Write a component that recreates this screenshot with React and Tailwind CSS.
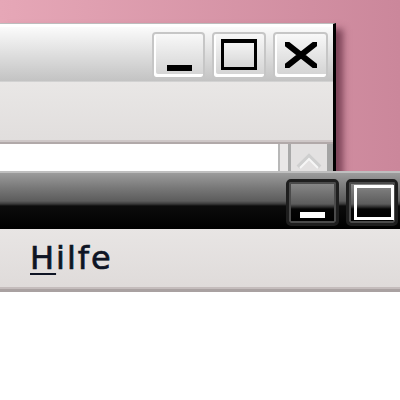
function LightButton({ children, className = '' }) {
  return (
    <div
      className={`relative h-[47px] rounded-[4px] border-2 border-[#c6c6c6] bg-gradient-to-b from-[#f8f8f8] to-[#d2d2d2] shadow-[inset_2px_-3px_0_#ffffff] ${className}`}
    >
      {children}
    </div>
  );
}

function DarkButton({ children, className = '' }) {
  return (
    <div
      className={`relative h-[47px] rounded-[5px] border-[3px] border-[#1e1e1e] bg-[linear-gradient(to_bottom,#8a8a8a_0px,#5c5c5c_22px,#2a2a2a_25px,#050505_27px,#000000_41px)] shadow-[inset_0_0_0_2px_#4a4a4a] ${className}`}
    >
      {children}
    </div>
  );
}

function BackWindow() {
  return (
    <div className="absolute left-0 top-[23px] w-[336px] h-[170px] flex flex-col border-r-[3px] border-black border-t border-t-[#bdbdbd] shadow-[7px_6px_7px_rgba(70,20,40,0.6)]">
      <div className="h-[57px] border-t-[3px] border-white bg-gradient-to-b from-[#fbfbfb] to-[#c3c3c3] flex justify-end items-start gap-[7px] pr-[5px] pt-[5px]">
        <LightButton className="w-[53px]">
          <div className="absolute left-[13px] top-[31px] w-[25px] h-[6px] bg-black" />
        </LightButton>
        <LightButton className="w-[54px]">
          <div className="absolute left-[7px] top-[5px] w-[36px] h-[31px] border-x-[3px] border-t-[4px] border-b-[3px] border-black bg-gradient-to-b from-[#f4f4f4] to-[#d6d6d6]" />
        </LightButton>
        <LightButton className="w-[55px]">
          <svg className="absolute left-[10px] top-[8px]" width="32" height="26" viewBox="0 0 32 26">
            <path d="M2 2 L30 24 M30 2 L2 24" stroke="#000" strokeWidth="6" strokeLinecap="square" fill="none" />
          </svg>
        </LightButton>
      </div>
      <div className="h-px bg-[#d2d2d2]" />
      <div className="h-[58px] bg-gradient-to-b from-[#e9e7e6] to-[#e1dedd]" />
      <div className="h-[2px] bg-[#cec7c7]" />
      <div className="h-[2px] bg-[#b1a9a9]" />
      <div className="flex-1 flex">
        <div className="w-[278px] bg-white" />
        <div className="w-[2px] bg-[#b8b8b8]" />
        <div className="w-[8px] bg-[#e9e7e7]" />
        <div className="w-[3px] bg-[#a9a9a9]" />
        <div className="w-[36px] bg-[#e3e1e1] flex justify-center pt-[9px]">
          <svg width="28" height="16" viewBox="0 0 28 16">
            <path d="M3 14 L14 3 L25 14" stroke="#cfcfcf" strokeWidth="4" fill="none" />
            <path d="M5 15 L14 6 L23 15" stroke="#f6f6f6" strokeWidth="2" fill="none" />
          </svg>
        </div>
        <div className="w-[6px] bg-[#a4a4a4]" />
      </div>
    </div>
  );
}

function FrontWindow() {
  return (
    <div className="absolute left-0 top-[171px] w-[466px] h-[240px] flex flex-col bg-white">
      <div className="h-[2px] bg-[#bfbfbf]" />
      <div className="h-[56px] bg-[linear-gradient(to_bottom,#9c9c9c_0px,#7a7a7a_14px,#5c5c5c_28px,#383838_31px,#0c0c0c_33px,#000000_56px)] flex justify-end items-start gap-[7px] pr-[8px] pt-[6px]">
        <DarkButton className="w-[53px]">
          <div className="absolute left-[11px] top-[30px] w-[25px] h-[6px] bg-white" />
        </DarkButton>
        <DarkButton className="w-[52px]">
          <div className="absolute left-[5px] top-[3px] w-[40px] h-[35px] border-[3px] border-white" />
        </DarkButton>
        <DarkButton className="w-[53px]">
          <svg className="absolute left-[9px] top-[7px]" width="32" height="26" viewBox="0 0 32 26">
            <path d="M2 2 L30 24 M30 2 L2 24" stroke="#fff" strokeWidth="6" fill="none" />
          </svg>
        </DarkButton>
      </div>
      <div className="h-[58px] bg-gradient-to-b from-[#e8e5e4] to-[#dfdbda] pl-[30px] pt-[11px]">
        <span
          className="text-[32px] leading-[37px] tracking-[2px] text-[#0e1424] [-webkit-text-stroke:0.7px_#0e1424]"
          style={{ fontFamily: '"DejaVu Sans", "Liberation Sans", sans-serif' }}
        >
          <span className="underline decoration-2 underline-offset-[4px]">H</span>ilfe
        </span>
      </div>
      <div className="h-[2px] bg-[#c4bcbc]" />
      <div className="h-[3px] bg-[#a9a1a1]" />
      <div className="flex-1 bg-white" />
    </div>
  );
}

export default function App() {
  return (
    <div className="relative w-[400px] h-[400px] overflow-hidden bg-gradient-to-r from-[#e6a7b7] to-[#cb879b]">
      <BackWindow />
      <FrontWindow />
    </div>
  );
}
